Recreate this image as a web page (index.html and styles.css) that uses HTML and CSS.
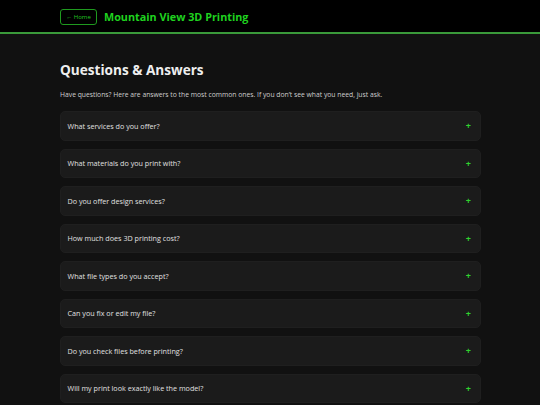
FILE: index.html
```html
<!DOCTYPE html>
<html lang="en">
<head>
<meta charset="utf-8">
<title>Mountain View 3D Printing - Questions & Answers</title>
<link rel="stylesheet" href="styles.css">
</head>
<body>
<header class="site-header">
  <div class="header-inner">
    <a class="home-btn" href="#">← Home</a>
    <h1 class="brand">Mountain View 3D Printing</h1>
  </div>
</header>
<main class="content">
  <h2 class="page-title">Questions &amp; Answers</h2>
  <p class="intro">Have questions? Here are answers to the most common ones. If you don’t see what you need, just ask.</p>
  <div class="faq-list">
    <div class="faq-item"><span class="q">What services do you offer?</span><span class="plus">+</span></div>
    <div class="faq-item"><span class="q">What materials do you print with?</span><span class="plus">+</span></div>
    <div class="faq-item"><span class="q">Do you offer design services?</span><span class="plus">+</span></div>
    <div class="faq-item"><span class="q">How much does 3D printing cost?</span><span class="plus">+</span></div>
    <div class="faq-item"><span class="q">What file types do you accept?</span><span class="plus">+</span></div>
    <div class="faq-item"><span class="q">Can you fix or edit my file?</span><span class="plus">+</span></div>
    <div class="faq-item"><span class="q">Do you check files before printing?</span><span class="plus">+</span></div>
    <div class="faq-item"><span class="q">Will my print look exactly like the model?</span><span class="plus">+</span></div>
  </div>
</main>
</body>
</html>
```
FILE: styles.css
```css
* { box-sizing: border-box; }
html, body { margin: 0; padding: 0; }
body {
  background: #111111;
  color: #e6e6e6;
  font-family: "Open Sans", "Noto Sans", sans-serif;
  overflow: hidden;
}
.site-header {
  background: #000000;
  border-bottom: 2px solid #3a9a3a;
  height: 34px;
}
.header-inner {
  display: flex;
  align-items: center;
  gap: 7px;
  padding: 0 60px;
  height: 32px;
}
.home-btn {
  display: inline-flex;
  align-items: center;
  justify-content: center;
  width: 37px;
  height: 16px;
  border: 1px solid #1f9a1f;
  border-radius: 3px;
  color: #22c322;
  font-size: 6px;
  text-decoration: none;
  margin-top: 1px;
}
.brand {
  margin: 0;
  color: #1fd21f;
  font-size: 10.8px;
  font-weight: 700;
  letter-spacing: 0;
}
.content {
  padding: 26px 59px 0 60px;
}
.page-title {
  margin: 0;
  font-size: 13.6px;
  font-weight: 700;
  color: #eeeeee;
  line-height: 20px;
}
.intro {
  margin: 10px 0 11px;
  font-size: 6.78px;
  color: #cfcfcf;
  line-height: 10px;
}
.faq-list {
  display: flex;
  flex-direction: column;
  gap: 8px;
}
.faq-item {
  display: flex;
  align-items: center;
  justify-content: space-between;
  height: 29.5px;
  padding: 0 9px 0 6.5px;
  background: #1b1b1b;
  border: 1px solid #1f1f1f;
  border-radius: 5px;
}
.q {
  font-size: 7.2px;
  color: #e0e0e0;
}
.plus {
  color: #2fd22f;
  font-size: 9px;
  font-weight: 700;
  line-height: 1;
}
```
